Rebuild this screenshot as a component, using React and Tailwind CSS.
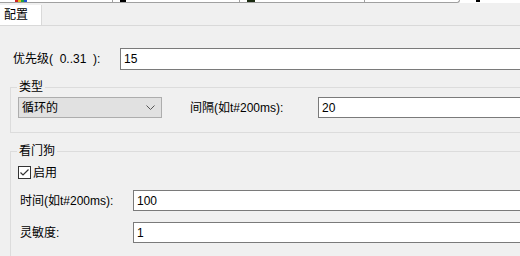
import { useState } from "react";

const font = { fontFamily: '"Liberation Sans", "Noto Sans CJK SC", sans-serif' };

function TextBox({ value, className = "" }) {
  return (
    <div
      className={
        "flex-1 h-[21px] bg-white border border-[#7a7a7a] pl-[3px] flex items-center text-[12px] text-black " +
        className
      }
    >
      {value}
    </div>
  );
}

function Group({ title, children, className = "" }) {
  return (
    <div className={"relative ml-[10px] border border-[#dcdcdc] " + className}>
      <span className="absolute left-[6px] -top-[9px] px-[2px] bg-[#f0f0f0] leading-[16px] text-[12px] text-black">
        {title}
      </span>
      {children}
    </div>
  );
}

export default function App() {
  const [enabled, setEnabled] = useState(true);

  return (
    <div className="w-[520px] h-[256px] overflow-hidden bg-[#f0f0f0]" style={font}>
      {/* cut-off tab strip of the window above */}
      <div className="flex h-[3px] bg-white">
        <div className="w-[113px] border-b border-r border-[#a0a0a0] relative">
          <div className="absolute left-[15px] top-0 flex h-[2px]">
            <span className="w-[3px] bg-[#d02020]" />
            <span className="w-[3px] bg-[#e0c020]" />
            <span className="w-[3px] bg-[#20a040]" />
            <span className="w-[3px] bg-[#2050d0]" />
          </div>
        </div>
        <div className="w-[127px] border-b border-r border-[#a0a0a0] relative">
          <span className="absolute left-[7px] top-0 w-[6px] h-[2px] bg-black" />
        </div>
        <div className="w-[125px] border-b border-r border-[#a0a0a0] relative">
          <span className="absolute left-[7px] top-0 w-[8px] h-[2px] bg-[#1a2a10]" />
        </div>
        <div className="w-[95px] border-b border-r border-[#a0a0a0] rounded-br-[3px]" />
        <div className="flex-1 relative">
          <span className="absolute left-[16px] top-0 w-[4px] h-[2px] bg-black" />
        </div>
      </div>

      {/* tab header */}
      <div className="flex items-end h-[23px] border-b border-[#d9d9d9]">
        <div className="w-[42px] h-[20px] bg-white border-r border-[#d9d9d9] pl-[4px] flex items-center text-[12px] text-black">
          配置
        </div>
      </div>

      <div className="w-[640px]">
        {/* priority */}
        <div className="flex items-center mt-[22px] pl-[13px]">
          <span className="w-[107px] whitespace-pre text-[12px] text-black">{"优先级(  0..31  ):"}</span>
          <TextBox value="15" className="h-[22px]" />
        </div>

        {/* type */}
        <Group title="类型" className="mt-[17px] h-[46px] pt-[9px]">
          <div className="flex items-center">
            <div className="ml-[7px] w-[144px] h-[21px] bg-[#e1e1e1] border border-[#adadad] flex items-center justify-between pl-[3px] pr-[6px] text-[12px] text-black">
              <span>循环的</span>
              <svg width="9" height="5" viewBox="0 0 9 5">
                <polyline points="0.5,0.5 4.5,4.5 8.5,0.5" fill="none" stroke="#555" strokeWidth="1" />
              </svg>
            </div>
            <span className="ml-[28px] w-[128px] text-[12px] text-black">间隔(如t#200ms):</span>
            <TextBox value="20" />
          </div>
        </Group>

        {/* watchdog */}
        <Group title="看门狗" className="mt-[18px] h-[140px] pt-[14px] border-b-0">
          <label className="ml-[7px] flex items-center h-[13px] text-[12px] text-black">
            <span
              onClick={() => setEnabled(!enabled)}
              className="w-[13px] h-[13px] bg-white border border-[#333] flex items-center justify-center"
            >
              {enabled && (
                <svg width="11" height="11" viewBox="0 0 11 11">
                  <polyline points="1.5,5.5 4,8 9.5,2.5" fill="none" stroke="#333" strokeWidth="1.2" />
                </svg>
              )}
            </span>
            <span className="ml-[2px]">启用</span>
          </label>

          <div className="flex items-center mt-[11px] pl-[9px]">
            <span className="w-[113px] text-[12px] text-black">时间(如t#200ms):</span>
            <TextBox value="100" />
          </div>

          <div className="flex items-center mt-[11px] pl-[9px]">
            <span className="w-[113px] text-[12px] text-black">灵敏度:</span>
            <TextBox value="1" />
          </div>
        </Group>
      </div>
    </div>
  );
}
